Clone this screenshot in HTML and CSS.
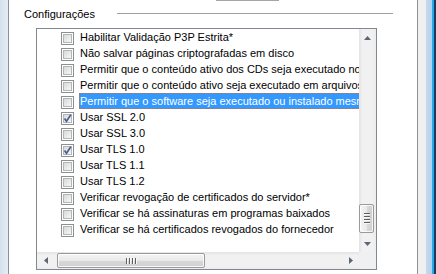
FILE: index.html
```html
<!DOCTYPE html>
<html lang="pt-BR">
<head>
    <meta charset="UTF-8">
    <meta name="viewport" content="width=device-width, initial-scale=1.0">
    <title>Opções da Internet - Avançadas</title>
    <link rel="stylesheet" href="styles.css">
</head>
<body>
    <div class="window">
        <div class="frame-left"></div>
        <div class="page">
            <div class="button-edge"></div>
            <div class="group-header">
                <span class="group-title">Configurações</span>
                <span class="group-line"></span>
            </div>
            <div class="listbox">
                <div class="list-view">
                    <ul class="options">
                        <li class="option"><span class="check"></span><span class="label">Habilitar Validação P3P Estrita*</span></li>
                        <li class="option"><span class="check"></span><span class="label">Não salvar páginas criptografadas em disco</span></li>
                        <li class="option"><span class="check"></span><span class="label">Permitir que o conteúdo ativo dos CDs seja executado no Meu Computador*</span></li>
                        <li class="option"><span class="check"></span><span class="label">Permitir que o conteúdo ativo seja executado em arquivos do Meu Computador*</span></li>
                        <li class="option selected"><span class="check"></span><span class="label">Permitir que o software seja executado ou instalado mesmo se a assinatura for inválida</span></li>
                        <li class="option"><span class="check checked"><svg viewBox="0 0 13 13" width="13" height="13"><path d="M3.5 6.5 L5.5 9.2 L9.8 2.8" fill="none" stroke="#4a5f94" stroke-width="1.7"/></svg></span><span class="label">Usar SSL 2.0</span></li>
                        <li class="option"><span class="check"></span><span class="label">Usar SSL 3.0</span></li>
                        <li class="option"><span class="check checked"><svg viewBox="0 0 13 13" width="13" height="13"><path d="M3.5 6.5 L5.5 9.2 L9.8 2.8" fill="none" stroke="#4a5f94" stroke-width="1.7"/></svg></span><span class="label">Usar TLS 1.0</span></li>
                        <li class="option"><span class="check"></span><span class="label">Usar TLS 1.1</span></li>
                        <li class="option"><span class="check"></span><span class="label">Usar TLS 1.2</span></li>
                        <li class="option"><span class="check"></span><span class="label">Verificar revogação de certificados do servidor*</span></li>
                        <li class="option"><span class="check"></span><span class="label">Verificar se há assinaturas em programas baixados</span></li>
                        <li class="option"><span class="check"></span><span class="label">Verificar se há certificados revogados do fornecedor</span></li>
                    </ul>
                </div>
                <div class="vscroll">
                    <div class="arrow-btn">
                        <svg width="7" height="4" viewBox="0 0 7 4"><path d="M3.5 0 L7 4 L0 4 Z" fill="#5d6675"/></svg>
                    </div>
                    <div class="vtrack">
                        <div class="vthumb">
                            <span class="grip-h"></span>
                            <span class="grip-h"></span>
                            <span class="grip-h"></span>
                            <span class="grip-h"></span>
                        </div>
                    </div>
                    <div class="arrow-btn">
                        <svg width="7" height="4" viewBox="0 0 7 4"><path d="M0 0 L7 0 L3.5 4 Z" fill="#5d6675"/></svg>
                    </div>
                </div>
                <div class="hscroll">
                    <div class="arrow-btn">
                        <svg width="4" height="7" viewBox="0 0 4 7"><path d="M0 3.5 L4 0 L4 7 Z" fill="#5d6675"/></svg>
                    </div>
                    <div class="htrack">
                        <div class="hthumb">
                            <span class="grip-v"></span>
                            <span class="grip-v"></span>
                            <span class="grip-v"></span>
                            <span class="grip-v"></span>
                        </div>
                    </div>
                    <div class="arrow-btn">
                        <svg width="4" height="7" viewBox="0 0 4 7"><path d="M0 0 L4 3.5 L0 7 Z" fill="#5d6675"/></svg>
                    </div>
                </div>
                <div class="corner"></div>
            </div>
        </div>
        <div class="dialog-gap"></div>
        <div class="frame-right"></div>
        <div class="frame-edge"></div>
    </div>
</body>
</html>
```

FILE: styles.css
```css
html, body {
    margin: 0;
    padding: 0;
}
body {
    font-family: "Liberation Sans", Arial, sans-serif;
    font-size: 11px;
    color: #000;
    background: #fff;
    width: 436px;
    height: 274px;
    overflow: hidden;
}
.window {
    display: flex;
    height: 274px;
}
.frame-left {
    width: 8px;
    background: linear-gradient(to right, #d5e1ee, #e4ecf4);
}
.page {
    width: 408px;
    background: #fff;
    border-left: 1px solid #8e9096;
    border-right: 1px solid #8e9096;
    display: flex;
    flex-direction: column;
}
.button-edge {
    height: 1px;
    width: 63px;
    margin-left: 207px;
    background: #a5a5a5;
}
.group-header {
    display: flex;
    align-items: flex-start;
    height: 13px;
    margin-top: 7px;
    padding-left: 15px;
}
.group-title {
    line-height: 13px;
}
.group-line {
    width: 276px;
    height: 1px;
    margin-top: 5px;
    margin-left: 22px;
    background: #a0a0a0;
}
.listbox {
    width: 339px;
    height: 240px;
    margin-top: 7px;
    margin-left: 27px;
    border: 1px solid #828790;
    display: grid;
    grid-template-columns: 322px 17px;
    grid-template-rows: 223px 17px;
    background: #fff;
}
.list-view {
    overflow: hidden;
}
.options {
    list-style: none;
    margin: 0;
    padding: 0;
    width: 600px;
}
.option {
    display: flex;
    align-items: flex-start;
    height: 16px;
    padding-left: 24px;
}
.check {
    width: 11px;
    height: 11px;
    margin-top: 3px;
    border: 1px solid #8e8f8f;
    background: #fff;
    position: relative;
    flex-shrink: 0;
}
.check::before {
    content: "";
    position: absolute;
    left: 1px;
    top: 1px;
    width: 7px;
    height: 7px;
    border: 1px solid #b3b5b7;
    background: linear-gradient(135deg, #d8d9da, #f6f6f6);
}
.check svg {
    position: absolute;
    left: -1px;
    top: -1px;
    z-index: 1;
}
.label {
    margin-left: 5px;
    padding: 1px 1px 0;
    height: 15px;
    line-height: 15px;
    white-space: nowrap;
}
.selected .label {
    background: #3399ff;
    color: #fff;
    outline: 1px dotted #c9712d;
    outline-offset: -1px;
    height: 16px;
    padding-top: 0;
    line-height: 17px;
}
.vscroll {
    display: flex;
    flex-direction: column;
    background: linear-gradient(to right, #e3e3e3, #f1f1f1 20%, #f1f1f1 80%, #ececec);
}
.hscroll {
    display: flex;
    background: linear-gradient(to bottom, #e3e3e3, #f1f1f1 20%, #f1f1f1 80%, #ececec);
}
.arrow-btn {
    width: 17px;
    height: 17px;
    flex-shrink: 0;
    display: flex;
    align-items: center;
    justify-content: center;
}
.vtrack {
    flex: 1;
}
.vthumb {
    margin-top: 158px;
    margin-left: 0;
    width: 13px;
    height: 27px;
    border: 1px solid #9a9a9a;
    border-radius: 2px;
    background: linear-gradient(to right, #f4f4f4, #e9e9e9 50%, #d8d8d8 51%, #d0d0d0);
    box-shadow: inset 0 0 0 1px rgba(255, 255, 255, 0.8);
    display: flex;
    flex-direction: column;
    align-items: center;
    justify-content: center;
    gap: 1px;
}
.grip-h {
    width: 6px;
    height: 1px;
    background: #5f5f5f;
    border-bottom: 1px solid #f8f8f8;
}
.htrack {
    flex: 1;
}
.hthumb {
    margin-left: 3px;
    margin-top: 1px;
    width: 146px;
    height: 13px;
    border: 1px solid #9a9a9a;
    border-radius: 2px;
    background: linear-gradient(to bottom, #f4f4f4, #e9e9e9 50%, #d8d8d8 51%, #d0d0d0);
    box-shadow: inset 0 0 0 1px rgba(255, 255, 255, 0.8);
    display: flex;
    align-items: center;
    justify-content: center;
    gap: 1px;
}
.grip-v {
    width: 1px;
    height: 6px;
    background: #5f5f5f;
    border-right: 1px solid #f8f8f8;
}
.corner {
    background: #f0f0f0;
}
.dialog-gap {
    width: 8px;
    background: #f0f0f0;
}
.frame-right {
    width: 6px;
    background: linear-gradient(to right, #c4daf0, #b6d0ea);
}
.frame-edge {
    width: 2px;
    border-left: 2px solid #2aa7e8;
    background: #1b3a5c;
}
```
